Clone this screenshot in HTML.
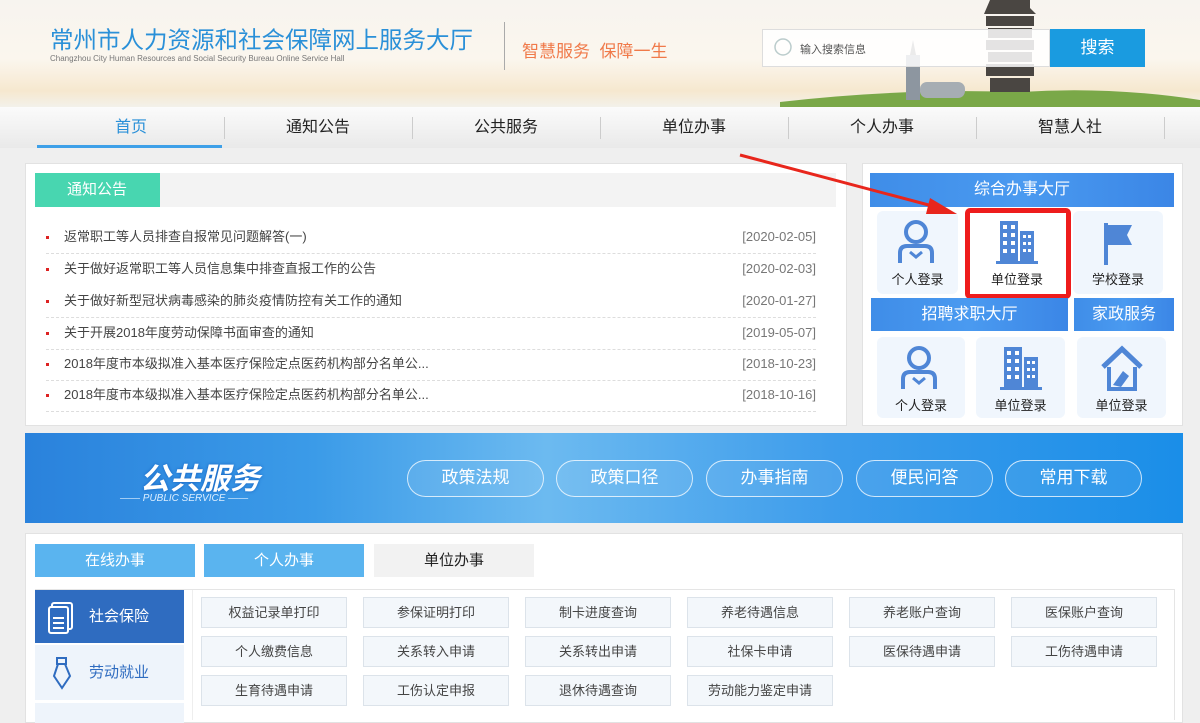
<!DOCTYPE html>
<html><head><meta charset="utf-8"><style>
*{margin:0;padding:0;box-sizing:border-box}
body{width:1200px;height:715px;overflow:hidden;background:#efefef;font-family:"Liberation Sans","Noto Sans CJK SC",sans-serif;position:relative}
.abs{position:absolute}
.hdr{left:0;top:0;width:1200px;height:107px;background:linear-gradient(180deg,#f7f4ef 0%,#fbf6ee 55%,#f6e8cf 85%,#f3f1ea 100%)}
.nav{left:0;top:107px;width:1200px;height:41px;background:linear-gradient(#fbfbfb,#e9e9e9)}
.nav div{position:absolute;top:0;height:41px;line-height:41px;text-align:center;font-size:16px;color:#222;width:188px}
.sep{position:absolute;top:10px;width:1px;height:22px;background:#ccc}
.panel{background:#fff;border:1px solid #e2e2e2}
.li{position:absolute;left:46px;width:770px;height:32px;font-size:13px;color:#444;border-bottom:1px dashed #ddd;line-height:30px}
.li b{position:absolute;left:0;top:14px;width:3px;height:3px;background:#d22}
.li span{position:absolute;left:18px}
.li i{position:absolute;right:0;font-style:normal;color:#777}
.bar{background:linear-gradient(90deg,#3f8de8,#4a9af0 50%,#3b86e6);color:#fff;font-size:16px;text-align:center}
.tile{background:#f0f6fd;border-radius:6px;text-align:center;font-size:13px;color:#222}
.tile svg{display:block;margin:8px auto 2px}
.pill{position:absolute;top:460px;width:137px;height:37px;border:1.5px solid rgba(255,255,255,.75);border-radius:19px;color:#fff;font-size:17px;text-align:center;line-height:34px;background:rgba(255,255,255,.08)}
.btn{position:absolute;width:146px;height:31px;background:#f3f7fb;border:1px solid #dce3ea;font-size:13px;color:#444;text-align:center;line-height:29px}
.tab{position:absolute;top:544px;width:160px;height:33px;line-height:33px;text-align:center;font-size:15px}
</style></head><body>
<div class="abs hdr"></div>
<svg class="abs" style="left:780px;top:0" width="420" height="107"><path d="M0 102 Q120 88 240 92 Q330 86 420 100 V107 H0Z" fill="#7aa848"/><rect x="126" y="55" width="14" height="45" fill="#8d96a0"/><path d="M133 40 L136 55 L130 55Z" fill="#777"/><rect x="140" y="82" width="45" height="16" fill="#a6adb3" rx="7"/><path d="M210 0h40v8l6 6h-52zM206 16h48v10h-48zM208 28h44v10h-44zM206 40h48v10h-48zM208 52h44v10h-44zM206 64h48v12h-48zM210 78h40v14h-40z" fill="#4a4642"/></svg>
<div class="abs" style="left:50px;top:21px;font-size:23.5px;color:#2a90d8">常州市人力资源和社会保障网上服务大厅</div>
<div class="abs" style="left:50px;top:54px;font-size:8px;color:#777">Changzhou City Human Resources and Social Security Bureau Online Service Hall</div>
<div class="abs" style="left:504px;top:22px;width:1px;height:48px;background:#aaa"></div>
<div class="abs" style="left:522px;top:37px;font-size:17px;color:#f07a4a">智慧服务 &nbsp;保障一生</div>
<div class="abs" style="left:762px;top:29px;width:288px;height:38px;background:rgba(255,255,255,.85);border:1px solid #ddd"></div>
<svg class="abs" style="left:773px;top:37px" width="22" height="22"><circle cx="10" cy="10" r="8" fill="none" stroke="#bcc" stroke-width="1.5"/></svg>
<div class="abs" style="left:800px;top:41px;font-size:11px;color:#555">输入搜索信息</div>
<div class="abs" style="left:1050px;top:29px;width:95px;height:38px;background:#1a9be0;color:#fff;font-size:17px;text-align:center;line-height:38px">搜索</div>

<div class="abs nav">
<div style="left:37px;color:#2a90d8">首页</div><div style="left:224px">通知公告</div><div style="left:412px">公共服务</div><div style="left:600px">单位办事</div><div style="left:788px">个人办事</div><div style="left:976px">智慧人社</div>
<span class="sep" style="left:224px"></span><span class="sep" style="left:412px"></span><span class="sep" style="left:600px"></span><span class="sep" style="left:788px"></span><span class="sep" style="left:976px"></span><span class="sep" style="left:1164px"></span>
</div>
<div class="abs" style="left:37px;top:145px;width:185px;height:3px;background:#3ea0e8"></div>

<div class="abs panel" style="left:25px;top:163px;width:822px;height:263px"></div>
<div class="abs" style="left:35px;top:173px;width:801px;height:34px;background:#f3f3f3"></div>
<div class="abs" style="left:35px;top:173px;width:125px;height:34px;background:#48d6b0;color:#fff;font-size:15px;line-height:34px;padding-left:32px">通知公告</div>
<div class="li" style="top:222px"><b></b><span>返常职工等人员排查自报常见问题解答(一)</span><i>[2020-02-05]</i></div>
<div class="li" style="top:254px;border:none"><b></b><span>关于做好返常职工等人员信息集中排查直报工作的公告</span><i>[2020-02-03]</i></div>
<div class="li" style="top:286px"><b></b><span>关于做好新型冠状病毒感染的肺炎疫情防控有关工作的通知</span><i>[2020-01-27]</i></div>
<div class="li" style="top:318px"><b></b><span>关于开展2018年度劳动保障书面审查的通知</span><i>[2019-05-07]</i></div>
<div class="li" style="top:349px"><b></b><span>2018年度市本级拟准入基本医疗保险定点医药机构部分名单公...</span><i>[2018-10-23]</i></div>
<div class="li" style="top:380px"><b></b><span>2018年度市本级拟准入基本医疗保险定点医药机构部分名单公...</span><i>[2018-10-16]</i></div>

<div class="abs panel" style="left:862px;top:163px;width:321px;height:263px"></div>
<div class="abs bar" style="left:870px;top:173px;width:304px;height:34px;line-height:34px">综合办事大厅</div>
<svg width="0" height="0" style="position:absolute"><defs>
<g id="per"><circle cx="20" cy="13" r="10" fill="none" stroke="#4f86d6" stroke-width="4"/><path d="M4 44 V34 q0-7 7-7 h18 q7 0 7 7 V44" fill="none" stroke="#4f86d6" stroke-width="4"/><path d="M14 33 l6 5 l6-5" fill="none" stroke="#4f86d6" stroke-width="3"/></g>
<g id="bld"><path d="M6 2h18v40h-18zM26 12h14v30h-14z" fill="#4f86d6"/><path d="M2 42h42v3h-42z" fill="#4f86d6"/><g fill="#fff"><rect x="9" y="6" width="4" height="4"/><rect x="17" y="6" width="4" height="4"/><rect x="9" y="14" width="4" height="4"/><rect x="17" y="14" width="4" height="4"/><rect x="9" y="22" width="4" height="4"/><rect x="17" y="22" width="4" height="4"/><rect x="9" y="30" width="4" height="4"/><rect x="17" y="30" width="4" height="4"/><rect x="29" y="16" width="3" height="3"/><rect x="34" y="16" width="3" height="3"/><rect x="29" y="23" width="3" height="3"/><rect x="34" y="23" width="3" height="3"/><rect x="29" y="30" width="3" height="3"/><rect x="34" y="30" width="3" height="3"/></g></g>
</defs></svg>
<div class="abs tile" style="left:877px;top:211px;width:81px;height:83px"><svg width="44" height="48"><use href="#per"/></svg>个人登录</div>
<div class="abs tile" style="left:971px;top:211px;width:92px;height:83px;background:#fff"><svg width="46" height="48"><use href="#bld"/></svg>单位登录</div>
<div class="abs" style="left:965px;top:208px;width:106px;height:91px;border:5px solid #ee1c1c;border-radius:5px"></div>
<div class="abs tile" style="left:1073px;top:211px;width:90px;height:83px"><svg width="44" height="48"><path d="M10 4v42" stroke="#4f86d6" stroke-width="4"/><path d="M12 6h24l-5 10 5 10h-24z" fill="#4f86d6"/></svg>学校登录</div>
<div class="abs bar" style="left:871px;top:298px;width:197px;height:33px;line-height:33px">招聘求职大厅</div>
<div class="abs bar" style="left:1074px;top:298px;width:100px;height:33px;line-height:33px">家政服务</div>
<div class="abs tile" style="left:877px;top:337px;width:88px;height:81px"><svg width="44" height="48"><use href="#per"/></svg>个人登录</div>
<div class="abs tile" style="left:976px;top:337px;width:89px;height:81px"><svg width="46" height="48"><use href="#bld"/></svg>单位登录</div>
<div class="abs tile" style="left:1077px;top:337px;width:89px;height:81px"><svg width="46" height="48"><path d="M4 22 L23 4 L42 22" fill="none" stroke="#4f86d6" stroke-width="5"/><path d="M10 22v22h26v-22" fill="none" stroke="#4f86d6" stroke-width="4"/><path d="M14 40 l10-14 6 5 -8 11z" fill="#4f86d6"/></svg>单位登录</div>

<svg class="abs" style="left:735px;top:150px" width="230" height="70"><path d="M5 5 L205 58" stroke="#e8261c" stroke-width="3"/><path d="M195 48 L222 64 L191 64Z" fill="#e8261c"/></svg>

<div class="abs" style="left:25px;top:433px;width:1158px;height:90px;background:linear-gradient(90deg,#2a82dc 0%,#3b9be8 25%,#6cbaf0 45%,#3d9ceb 70%,#1a8ee8 100%)"></div>
<div class="abs" style="left:140px;top:454px;font-size:30px;font-weight:bold;font-style:italic;color:#fff;text-shadow:0 0 3px #1560c0">公共服务</div>
<div class="abs" style="left:120px;top:493px;font-size:10px;color:#dceeff;font-style:italic">—— PUBLIC SERVICE ——</div>
<div class="pill" style="left:407px">政策法规</div><div class="pill" style="left:556px">政策口径</div><div class="pill" style="left:706px">办事指南</div><div class="pill" style="left:856px">便民问答</div><div class="pill" style="left:1005px">常用下载</div>

<div class="abs" style="left:25px;top:533px;width:1158px;height:190px;background:#fff;border:1px solid #e2e2e2"></div>
<div class="tab" style="left:35px;background:#5ab4ef;color:#fff">在线办事</div>
<div class="tab" style="left:204px;background:#5ab4ef;color:#fff">个人办事</div>
<div class="tab" style="left:374px;background:#f2f2f2;color:#222">单位办事</div>
<div class="abs" style="left:35px;top:589px;width:1140px;height:1px;background:#e5e5e5"></div>
<div class="abs" style="left:35px;top:590px;width:149px;height:53px;background:#2f6cc0;color:#fff;font-size:15px;line-height:53px;padding-left:54px">社会保险</div>
<svg class="abs" style="left:48px;top:602px" width="28" height="32"><rect x="4" y="1" width="20" height="26" rx="2" fill="none" stroke="#fff" stroke-width="2"/><rect x="1" y="5" width="19" height="26" rx="2" fill="#2f6cc0" stroke="#fff" stroke-width="2"/><path d="M5 16h11M5 21h11M5 26h11" stroke="#fff" stroke-width="2"/></svg>
<div class="abs" style="left:176px;top:611px;width:0;height:0;border:8px solid transparent;border-right-color:#fff"></div>
<div class="abs" style="left:35px;top:645px;width:149px;height:55px;background:#eef4fb;color:#2f6cc0;font-size:15px;line-height:55px;padding-left:54px">劳动就业</div>
<svg class="abs" style="left:50px;top:656px" width="24" height="34"><path d="M7 2h9v6h-9zM8 8 L4 20 L12 32 L20 20 L15 8" fill="none" stroke="#2f6cc0" stroke-width="2"/></svg>
<div class="abs" style="left:35px;top:703px;width:149px;height:20px;background:#eef4fb"></div>
<div class="abs" style="left:192px;top:590px;width:983px;height:130px;border-left:1px solid #eee;border-right:1px solid #e5e5e5"></div>
<div class="btn" style="left:201px;top:597px">权益记录单打印</div><div class="btn" style="left:363px;top:597px">参保证明打印</div><div class="btn" style="left:525px;top:597px">制卡进度查询</div><div class="btn" style="left:687px;top:597px">养老待遇信息</div><div class="btn" style="left:849px;top:597px">养老账户查询</div><div class="btn" style="left:1011px;top:597px">医保账户查询</div>
<div class="btn" style="left:201px;top:636px">个人缴费信息</div><div class="btn" style="left:363px;top:636px">关系转入申请</div><div class="btn" style="left:525px;top:636px">关系转出申请</div><div class="btn" style="left:687px;top:636px">社保卡申请</div><div class="btn" style="left:849px;top:636px">医保待遇申请</div><div class="btn" style="left:1011px;top:636px">工伤待遇申请</div>
<div class="btn" style="left:201px;top:675px">生育待遇申请</div><div class="btn" style="left:363px;top:675px">工伤认定申报</div><div class="btn" style="left:525px;top:675px">退休待遇查询</div><div class="btn" style="left:687px;top:675px">劳动能力鉴定申请</div>
</body></html>
